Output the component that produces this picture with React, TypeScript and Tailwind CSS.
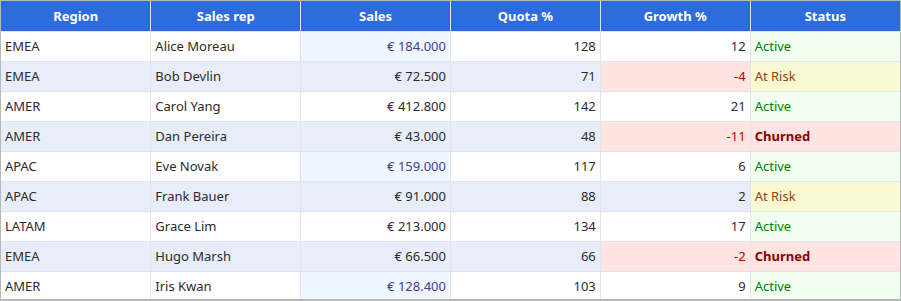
import React from 'react';

type Row = {
  region: string;
  rep: string;
  sales: string;
  hot: boolean;
  quota: number;
  growth: number;
  status: 'Active' | 'At Risk' | 'Churned';
};

const ROWS: Row[] = [
  { region: 'EMEA', rep: 'Alice Moreau', sales: '€ 184.000', hot: true, quota: 128, growth: 12, status: 'Active' },
  { region: 'EMEA', rep: 'Bob Devlin', sales: '€ 72.500', hot: false, quota: 71, growth: -4, status: 'At Risk' },
  { region: 'AMER', rep: 'Carol Yang', sales: '€ 412.800', hot: false, quota: 142, growth: 21, status: 'Active' },
  { region: 'AMER', rep: 'Dan Pereira', sales: '€ 43.000', hot: false, quota: 48, growth: -11, status: 'Churned' },
  { region: 'APAC', rep: 'Eve Novak', sales: '€ 159.000', hot: true, quota: 117, growth: 6, status: 'Active' },
  { region: 'APAC', rep: 'Frank Bauer', sales: '€ 91.000', hot: false, quota: 88, growth: 2, status: 'At Risk' },
  { region: 'LATAM', rep: 'Grace Lim', sales: '€ 213.000', hot: false, quota: 134, growth: 17, status: 'Active' },
  { region: 'EMEA', rep: 'Hugo Marsh', sales: '€ 66.500', hot: false, quota: 66, growth: -2, status: 'Churned' },
  { region: 'AMER', rep: 'Iris Kwan', sales: '€ 128.400', hot: true, quota: 103, growth: 9, status: 'Active' },
];

const STATUS_CLS: Record<Row['status'], string> = {
  Active: 'bg-[#f0fff0] text-[#008000]',
  'At Risk': 'bg-[#fafad2] text-[#8b4513]',
  Churned: 'bg-[#ffe4e1] text-[#8b0000] font-bold',
};

const HEADERS = ['Region', 'Sales rep', 'Sales', 'Quota %', 'Growth %', 'Status'];

export default function App() {
  return (
    <div
      className="w-[901px] h-[301px] overflow-hidden bg-white border border-[#b8b8b8] border-b-2 text-[13px] text-[#2b2b2b]"
      style={{ fontFamily: '"Noto Sans", "Open Sans", sans-serif' }}
    >
      <table className="w-full table-fixed border-collapse">
        <thead>
          <tr className="h-[30px] bg-[#2e6bdc] text-white">
            {HEADERS.map((h, i) => (
              <th
                key={h}
                className={`font-bold text-center px-1 pt-[2px] border-b border-[#dfe5f0] ${i < 5 ? 'border-r' : ''}`}
              >
                {h}
              </th>
            ))}
          </tr>
        </thead>
        <tbody>
          {ROWS.map((r, idx) => {
            const alt = idx % 2 === 1;
            const rowBg = alt ? 'bg-[#e8eef9]' : 'bg-white';
            const cell = 'border-r border-b border-[#dfe4ee] px-1 pt-[2px] whitespace-nowrap';
            return (
              <tr key={r.rep} className={`h-[30px] ${rowBg}`}>
                <td className={`${cell} text-left`}>{r.region}</td>
                <td className={`${cell} text-left`}>{r.rep}</td>
                <td className={`${cell} text-right ${r.hot ? 'bg-[#eef6ff] text-[#483d8b]' : ''}`}>{r.sales}</td>
                <td className={`${cell} text-right`}>{r.quota}</td>
                <td className={`${cell} text-right ${r.growth < 0 ? 'bg-[#ffe4e1] text-[#c00000]' : ''}`}>{r.growth}</td>
                <td className={`border-b border-[#dfe4ee] px-1 pt-[2px] text-left ${STATUS_CLS[r.status]}`}>{r.status}</td>
              </tr>
            );
          })}
        </tbody>
      </table>
    </div>
  );
}
